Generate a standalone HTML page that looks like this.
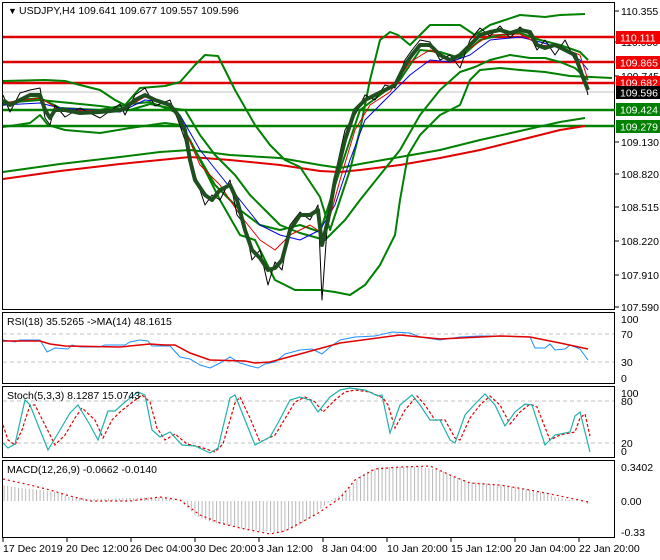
<!DOCTYPE html>
<html><head><meta charset="utf-8"><style>
html,body{margin:0;padding:0;background:#fff;}
svg{display:block;font-family:"Liberation Sans",sans-serif;font-size:10.5px;}
</style></head><body>
<svg width="660" height="560" viewBox="0 0 660 560" xmlns="http://www.w3.org/2000/svg">
<defs>
<pattern id="hist" width="3.6" height="10" patternUnits="userSpaceOnUse"><rect x="0" y="0" width="1" height="10" fill="#b8b8b8"/></pattern>
</defs>
<rect width="660" height="560" fill="#fff"/>
<!-- panel borders -->
<g fill="none" stroke="#000" stroke-width="1">
<rect x="2.5" y="2.5" width="612" height="307"/>
<rect x="2.5" y="312.5" width="612" height="71"/>
<rect x="2.5" y="386.5" width="612" height="71"/>
<rect x="2.5" y="460.5" width="612" height="77"/>
</g>
<!-- main chart -->
<line x1="3" y1="92" x2="614" y2="92" stroke="#c0c0c0"/>
<g stroke="#e00000" stroke-width="2.5"><line x1="3" y1="37" x2="615" y2="37"/><line x1="3" y1="62" x2="615" y2="62"/><line x1="3" y1="83" x2="615" y2="83"/></g>
<g stroke="#008000" stroke-width="2.5"><line x1="3" y1="110" x2="615" y2="110"/><line x1="3" y1="126" x2="615" y2="126"/></g>
<g fill="none" stroke-linejoin="round">
<polyline stroke="#008000" stroke-width="2" points="3,172 60,164 120,157 160,152 190,150 230,155 280,158 320,165 340,168 360,164 400,157 440,150 480,140 520,131 560,122 585,118"/>
<polyline stroke="#e00000" stroke-width="2" points="3,179 60,171 120,164 160,160 190,157 230,160 280,165 320,171 340,172 360,170 400,165 440,158 480,150 520,140 560,130 585,126"/>
<polyline stroke="#008000" stroke-width="2" points="3,81 45,80 65,81 80,85 100,90 115,100 125,105 140,88 165,86 180,82 195,65 205,55 218,56 235,90 255,125 270,145 285,160 300,167 320,197 330,230 340,200 350,170 360,130 370,80 380,40 390,32 398,35 410,45 430,25 460,25 475,35 490,25 520,15 545,17 560,15 585,14"/>
<polyline stroke="#008000" stroke-width="2" points="3,127 30,123 40,115 48,125 65,130 100,133 130,128 165,123 180,125 190,140 205,170 220,200 240,235 255,240 275,280 295,290 320,290 335,292 350,295 365,285 380,265 395,235 400,200 408,155 420,135 440,115 460,105 470,80 480,70 500,68 520,70 545,72 570,76 612,78"/>
<polyline stroke="#008000" stroke-width="2" points="3,103 40,100 80,104 100,106 130,110 150,104 170,108 185,110 200,135 215,155 235,175 250,195 265,210 280,225 300,233 325,240 345,220 360,200 380,175 400,150 420,115 440,90 460,72 475,67 490,60 510,55 530,58 545,58 560,62 575,68 588,80"/>
<polyline stroke="#008000" stroke-width="2" points="3,105 20,100 40,98 60,108 100,110 130,104 150,102 175,112 195,150 215,185 240,210 260,225 280,230 300,225 320,232 340,170 360,110 380,95 400,80 420,50 440,52 460,58 480,40 500,35 520,33 540,40 560,45 580,52 588,60"/>
<polyline stroke="#0000e0" stroke-width="1" points="3,105 40,103 60,108 120,112 145,100 165,102 180,115 200,150 220,175 240,200 260,225 280,235 300,240 320,230 335,205 350,160 365,120 385,100 410,75 430,60 450,62 470,55 490,40 520,37 540,42 560,48 580,60 588,70"/>
<polyline stroke="#e00000" stroke-width="1" points="3,103 40,98 60,110 120,111 145,97 170,104 185,130 200,165 220,185 240,215 260,240 275,250 290,235 310,225 325,235 340,180 355,130 370,105 390,92 410,62 430,50 450,60 470,48 490,35 520,34 540,45 560,47 580,55 588,80"/>
<!-- candles approx -->
<polyline stroke="#000" stroke-width="1" points="3,95 10,112 20,93 30,90 40,88 45,118 50,125 55,105 65,117 80,108 100,118 120,104 125,115 135,95 145,88 155,106 170,100 178,120 185,140 190,165 195,175 205,205 212,195 220,200 230,180 237,215 245,225 252,260 260,250 268,285 275,262 282,270 290,225 300,212 310,220 318,205 322,300 328,215 335,175 345,130 355,115 365,95 375,100 385,85 395,88 405,60 412,50 420,40 430,42 440,60 450,55 460,68 470,40 480,28 490,36 500,26 510,38 520,27 530,35 537,50 545,40 555,55 565,40 575,60 582,70 588,95"/>
<polyline stroke="#1f4f1f" stroke-width="4" points="3,100 10,105 20,100 30,95 40,95 45,110 50,118 55,110 65,110 80,113 100,112 120,110 125,108 135,100 145,95 155,100 170,105 178,115 185,130 190,160 195,180 205,195 212,200 220,190 230,185 237,200 245,230 252,250 260,258 268,270 275,268 282,260 290,230 300,215 310,215 318,210 322,245 328,220 335,180 345,140 355,110 365,100 375,95 385,90 395,85 405,65 412,55 420,45 430,45 440,55 450,60 460,55 470,45 480,35 490,32 500,30 510,33 520,30 530,32 537,45 545,48 555,45 565,50 575,55 582,75 588,90"/>
</g>
<text x="8" y="14" font-size="9">▼</text>
<text x="19" y="14">USDJPY,H4  109.641 109.677 109.557 109.596</text>
<!-- right axis -->
<g stroke="#000"><line x1="615" y1="11" x2="619" y2="11"/><line x1="615" y1="42" x2="619" y2="42"/><line x1="615" y1="76" x2="619" y2="76"/><line x1="615" y1="142" x2="619" y2="142"/><line x1="615" y1="174" x2="619" y2="174"/><line x1="615" y1="207" x2="619" y2="207"/><line x1="615" y1="241" x2="619" y2="241"/><line x1="615" y1="275" x2="619" y2="275"/><line x1="615" y1="307" x2="619" y2="307"/></g>
<g fill="#000"><text x="621" y="15">110.355</text><text x="621" y="46">110.050</text><text x="621" y="80">109.745</text><text x="621" y="146">109.130</text><text x="621" y="178">108.820</text><text x="621" y="211">108.515</text><text x="621" y="245">108.220</text><text x="621" y="279">107.910</text><text x="621" y="311">107.590</text></g>
<rect x="616" y="31" width="44" height="13" fill="#f00000"/><text x="620" y="41.5" fill="#fff">110.111</text>
<rect x="616" y="56" width="44" height="13" fill="#f00000"/><text x="620" y="66.5" fill="#fff">109.865</text>
<rect x="616" y="76" width="44" height="13" fill="#f00000"/><text x="620" y="86.5" fill="#fff">109.682</text>
<rect x="616" y="86" width="44" height="13" fill="#000"/><text x="620" y="96.5" fill="#fff">109.596</text>
<rect x="616" y="103" width="44" height="13" fill="#008000"/><text x="620" y="113.5" fill="#fff">109.424</text>
<rect x="616" y="120" width="44" height="13" fill="#008000"/><text x="620" y="130.5" fill="#fff">109.279</text>
<!-- RSI -->
<g stroke="#c0c0c0" stroke-dasharray="4,3"><line x1="3" y1="334" x2="614" y2="334"/><line x1="3" y1="362" x2="614" y2="362"/></g>
<polyline fill="none" stroke="#1e90ff" stroke-width="1" points="3,340 15,342 20,340 27,340 40,340 47,352 55,348 68,349 72,345 80,347 100,347 105,345 125,345 130,342 140,340 148,341 152,346 170,346 180,357 190,359 200,365 210,368 220,363 230,357 240,363 250,366 258,368 265,364 275,362 285,354 300,350 312,349 322,354 330,347 340,340 355,337 375,336 392,332 410,333 420,337 440,340 460,337 480,336 500,336 530,337 535,348 545,348 550,344 555,350 565,349 570,345 580,349 588,360"/>
<polyline fill="none" stroke="#e00000" stroke-width="1.5" points="3,341 40,341 50,344 65,346 120,347 150,344 165,345 175,345 190,353 210,360 245,361 255,363 270,362 300,354 340,343 370,339 400,335 440,339 500,336 530,337 560,343 588,349"/>
<text x="7" y="325">RSI(18) 35.5265  -&gt;MA(14) 48.1615</text>
<g fill="#000"><text x="621" y="323">100</text><text x="621" y="338">70</text><text x="621" y="366">30</text><text x="621" y="382">0</text></g>
<!-- Stoch -->
<g stroke="#c0c0c0" stroke-dasharray="4,3"><line x1="3" y1="401" x2="614" y2="401"/><line x1="3" y1="443" x2="614" y2="443"/></g>
<polyline fill="none" stroke="#e00000" stroke-width="1.2" stroke-dasharray="3,2" points="3,425 8,440 15,445 22,430 30,405 35,405 45,425 55,445 65,435 75,418 82,408 95,420 103,438 112,420 120,412 130,404 142,395 150,402 157,428 165,440 175,434 187,444 200,447 215,452 223,444 235,403 240,397 250,418 260,442 275,435 283,422 295,402 305,397 315,402 323,412 335,400 345,392 355,390 370,392 383,398 388,405 395,428 405,410 417,396 425,405 435,420 445,420 455,438 460,440 470,418 480,405 490,396 500,405 510,424 520,412 530,404 537,407 550,440 560,435 575,432 580,418 585,414 590,436"/>
<polyline fill="none" stroke="#20b2aa" stroke-width="1.2" points="3,443 8,448 15,444 25,400 30,405 40,430 48,450 60,430 70,413 78,405 90,425 98,440 108,411 115,411 125,402 138,392 145,395 152,430 160,437 170,432 182,445 195,446 210,453 218,448 230,398 235,395 245,420 255,445 270,437 278,423 290,400 300,397 310,400 318,412 330,397 340,390 350,388 365,390 378,396 382,395 390,433 400,405 412,395 420,405 430,420 440,420 450,440 455,443 465,415 475,404 485,394 495,405 505,426 515,412 525,404 532,405 545,445 555,435 570,432 575,416 580,412 590,452"/>
<text x="7" y="399">Stoch(5,3,3) 8.1287 15.0743</text>
<g fill="#000"><text x="621" y="397">100</text><text x="621" y="405">80</text><text x="621" y="447">20</text><text x="621" y="455">0</text></g>
<!-- MACD -->
<polygon fill="url(#hist)" points="3,501 3,485 20,488 40,490 55,492 70,497 90,499 130,498 160,497 180,501 195,515 210,522 240,528 260,531 280,533 295,528 310,518 322,508 330,501 340,495 350,487 360,476 370,470 380,467 420,467 440,470 455,477 470,482 500,485 520,488 540,492 555,497 570,500 585,501 588,505 588,501"/>
<polyline fill="none" stroke="#e00000" stroke-width="1.2" stroke-dasharray="2,3" points="3,479 30,485 50,490 70,496 90,501 130,501 160,497 180,500 200,515 220,523 240,528 270,534 285,531 300,523 320,512 340,498 355,480 375,469 400,467 430,466 450,475 470,483 500,485 530,490 560,496 588,502"/>
<text x="7" y="473">MACD(12,26,9) -0.0662 -0.0140</text>
<g fill="#000"><text x="621" y="471">0.3402</text><text x="621" y="505">0.00</text><text x="621" y="536">-0.33</text></g>
<!-- time axis -->
<g stroke="#000"><line x1="3" y1="538" x2="3" y2="542"/><line x1="67" y1="538" x2="67" y2="542"/><line x1="131" y1="538" x2="131" y2="542"/><line x1="195" y1="538" x2="195" y2="542"/><line x1="259" y1="538" x2="259" y2="542"/><line x1="323" y1="538" x2="323" y2="542"/><line x1="387" y1="538" x2="387" y2="542"/><line x1="451" y1="538" x2="451" y2="542"/><line x1="515" y1="538" x2="515" y2="542"/><line x1="579" y1="538" x2="579" y2="542"/></g>
<g fill="#000"><text x="3" y="552">17 Dec 2019</text><text x="66" y="552">20 Dec 12:00</text><text x="130" y="552">26 Dec 04:00</text><text x="194" y="552">30 Dec 20:00</text><text x="258" y="552">3 Jan 12:00</text><text x="322" y="552">8 Jan 04:00</text><text x="387" y="552">10 Jan 20:00</text><text x="451" y="552">15 Jan 12:00</text><text x="515" y="552">20 Jan 04:00</text><text x="579" y="552">22 Jan 20:00</text></g>
</svg>
</body></html>
